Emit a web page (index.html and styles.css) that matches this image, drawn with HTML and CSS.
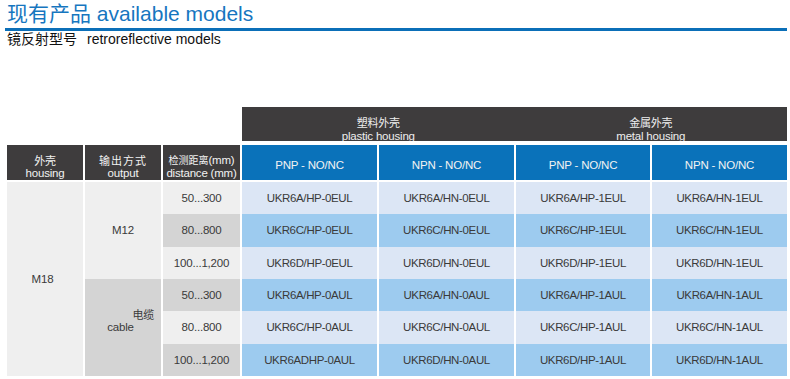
FILE: index.html
```html
<!DOCTYPE html>
<html lang="zh">
<head>
<meta charset="utf-8">
<title>现有产品 available models</title>
<link rel="stylesheet" href="styles.css">
</head>
<body>
<div class="page">
  <h1 class="title">现有产品 available models</h1>
  <h2 class="subtitle">镜反射型号<span class="sub-en">retroreflective models</span></h2>

  <div class="tbl table-head">
    <div class="band">
      <div class="group"><span class="cn">塑料外壳</span><span class="en">plastic housing</span></div>
      <div class="group"><span class="cn">金属外壳</span><span class="en">metal housing</span></div>
    </div>
    <div class="th dark"><span class="cn">外壳</span><span class="en">housing</span></div>
    <div class="th dark"><span class="cn wide">输出方式</span><span class="en">output</span></div>
    <div class="th dark"><span class="en"><span class="cn-in">检测距离</span>(mm)</span><span class="en">distance (mm)</span></div>
    <div class="th blue">PNP - NO/NC</div>
    <div class="th blue">NPN - NO/NC</div>
    <div class="th blue">PNP - NO/NC</div>
    <div class="th blue">NPN - NO/NC</div>
  </div>

  <div class="tbl table-body">
    <div class="td housing">M18</div>
    <div class="td output-m12">M12</div>
    <div class="td dist odd">50...300</div>
    <div class="td model odd">UKR6A/HP-0EUL</div>
    <div class="td model odd">UKR6A/HN-0EUL</div>
    <div class="td model odd">UKR6A/HP-1EUL</div>
    <div class="td model odd">UKR6A/HN-1EUL</div>

    <div class="td dist even">80...800</div>
    <div class="td model even">UKR6C/HP-0EUL</div>
    <div class="td model even">UKR6C/HN-0EUL</div>
    <div class="td model even">UKR6C/HP-1EUL</div>
    <div class="td model even">UKR6C/HN-1EUL</div>

    <div class="td dist odd">100...1,200</div>
    <div class="td model odd">UKR6D/HP-0EUL</div>
    <div class="td model odd">UKR6D/HN-0EUL</div>
    <div class="td model odd">UKR6D/HP-1EUL</div>
    <div class="td model odd">UKR6D/HN-1EUL</div>

    <div class="td output-cable"><span class="cable-cn">电缆</span><span class="cable-en">cable</span></div>
    <div class="td dist even">50...300</div>
    <div class="td model even">UKR6A/HP-0AUL</div>
    <div class="td model even">UKR6A/HN-0AUL</div>
    <div class="td model even">UKR6A/HP-1AUL</div>
    <div class="td model even">UKR6A/HN-1AUL</div>

    <div class="td dist odd">80...800</div>
    <div class="td model odd">UKR6C/HP-0AUL</div>
    <div class="td model odd">UKR6C/HN-0AUL</div>
    <div class="td model odd">UKR6C/HP-1AUL</div>
    <div class="td model odd">UKR6C/HN-1AUL</div>

    <div class="td dist even">100...1,200</div>
    <div class="td model even">UKR6ADHP-0AUL</div>
    <div class="td model even">UKR6D/HN-0AUL</div>
    <div class="td model even">UKR6D/HP-1AUL</div>
    <div class="td model even">UKR6D/HN-1AUL</div>
  </div>
</div>
</body>
</html>
```

FILE: styles.css
```css
* { box-sizing: border-box; }

body {
  margin: 0;
  background: #ffffff;
  font-family: "Liberation Sans", Arial, "Noto Sans CJK SC", sans-serif;
}

.page {
  width: 790px;
}

.title {
  margin: 0 3px 0 5px;
  padding: 1px 0 1px 2px;
  font-size: 21px;
  line-height: 26px;
  font-weight: normal;
  color: #1676bf;
  border-bottom: 3px solid #0b6fb8;
}

.subtitle {
  margin: 0;
  padding-left: 7px;
  font-size: 14px;
  line-height: 16px;
  font-weight: normal;
  color: #111111;
}

.sub-en {
  margin-left: 10px;
}

.tbl {
  font-family: "Liberation Sans", Arial, "Noto Sans CJK SC", sans-serif;
  display: grid;
  grid-template-columns: 76px 76px 77px 135px 135px 134px 135px;
  column-gap: 2px;
  margin-left: 7px;
  font-size: 11.5px;
  letter-spacing: -0.2px;
}

.table-head {
  margin-top: 60px;
  grid-template-rows: 34px 35px;
  row-gap: 4px;
}

.band {
  grid-column: 4 / 8;
  grid-row: 1;
  background: #3e3c3d;
  display: flex;
  overflow: hidden;
}

.group {
  flex: 1;
  display: flex;
  flex-direction: column;
  align-items: center;
  padding-top: 9px;
  line-height: 14px;
  color: #eeeeee;
}

.cn {
  font-family: "Noto Sans CJK SC", sans-serif;
  font-size: 11px;
  line-height: 13px;
}

.cn.wide {
  letter-spacing: 1px;
}

.cn-in {
  font-family: "Noto Sans CJK SC", sans-serif;
  font-size: 10px;
  letter-spacing: 0;
}

.th {
  grid-row: 2;
  display: flex;
  flex-direction: column;
  justify-content: center;
  align-items: center;
  padding-top: 6px;
  line-height: 13px;
  color: #f2f2f2;
  white-space: nowrap;
}

.th.dark {
  background: #3e3c3d;
  padding-top: 8px;
}

.th.blue { background: #0a72ba; }

.table-body {
  margin-top: 2px;
  height: 194px;
  grid-template-rows: repeat(6, 1fr);
}

.td {
  display: flex;
  align-items: center;
  justify-content: center;
  color: #3a3a3a;
  white-space: nowrap;
}

.model {
  letter-spacing: -0.35px;
}

.housing {
  grid-row: span 6;
  background: #efefef;
  padding-right: 5px;
}

.output-m12 {
  grid-row: span 3;
  background: #efefef;
}

.output-cable {
  grid-row: span 3;
  background: #d4d4d4;
  flex-direction: column;
  padding-bottom: 12px;
  line-height: 13px;
}

.cable-cn {
  align-self: flex-end;
  margin-right: 7px;
  font-family: "Noto Sans CJK SC", sans-serif;
  font-size: 11px;
}

.cable-en {
  margin-right: 5px;
}

.dist.odd { background: #efefef; }
.dist.even { background: #d4d4d4; }
.model.odd { background: #dce6f5; }
.model.even { background: #9dcbef; }
```
